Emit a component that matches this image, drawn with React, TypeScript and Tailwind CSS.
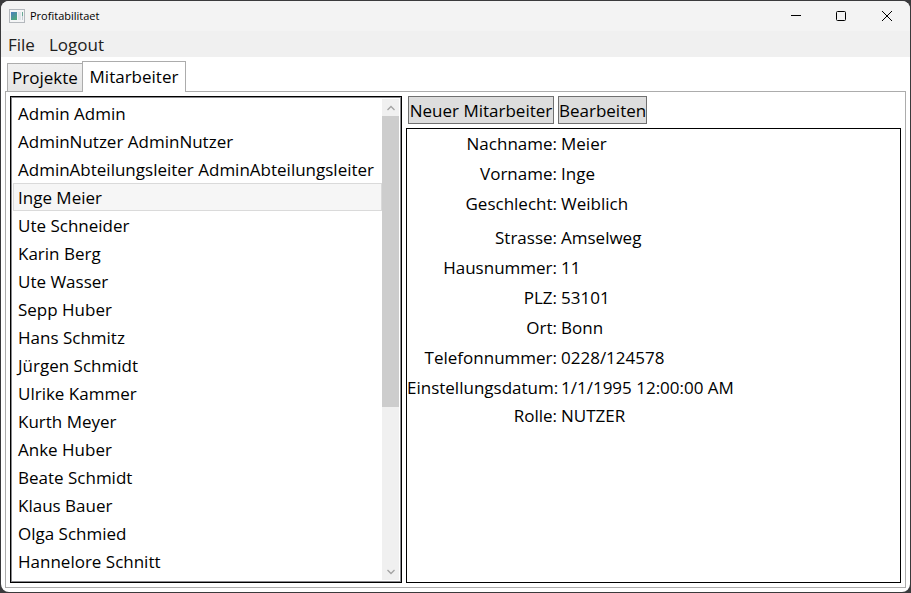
import { useState } from "react";

const employees = [
  "Admin Admin",
  "AdminNutzer AdminNutzer",
  "AdminAbteilungsleiter AdminAbteilungsleiter",
  "Inge Meier",
  "Ute Schneider",
  "Karin Berg",
  "Ute Wasser",
  "Sepp Huber",
  "Hans Schmitz",
  "Jürgen Schmidt",
  "Ulrike Kammer",
  "Kurth Meyer",
  "Anke Huber",
  "Beate Schmidt",
  "Klaus Bauer",
  "Olga Schmied",
  "Hannelore Schnitt",
];

const personal = [
  ["Nachname:", "Meier"],
  ["Vorname:", "Inge"],
  ["Geschlecht:", "Weiblich"],
];

const contact = [
  ["Strasse:", "Amselweg"],
  ["Hausnummer:", "11"],
  ["PLZ:", "53101"],
  ["Ort:", "Bonn"],
  ["Telefonnummer:", "0228/124578"],
  ["Einstellungsdatum:", "1/1/1995 12:00:00 AM"],
];

function TitleBar() {
  return (
    <header className="flex h-[30px] shrink-0 items-center bg-[#f3f3f3] pl-2">
      <svg width="16" height="14" viewBox="0 0 16 14" aria-hidden="true">
        <defs>
          <linearGradient id="pane" x1="0" y1="0" x2="0.6" y2="1">
            <stop offset="0" stopColor="#4a7fc0" />
            <stop offset="1" stopColor="#4fa77c" />
          </linearGradient>
        </defs>
        <rect x="0.5" y="0.5" width="15" height="13" fill="#f4f5f6" stroke="#b4b8bd" />
        <rect x="2" y="3" width="6" height="8" fill="url(#pane)" />
        <rect x="9" y="3" width="3" height="8" fill="#dfe5ea" />
        <rect x="13" y="3" width="1" height="4" fill="#69a995" />
        <rect x="13" y="7" width="1" height="4" fill="#c5ccd3" />
      </svg>
      <h1 className="ml-[5px] text-[11px] leading-4">Profitabilitaet</h1>
      <div className="ml-auto flex h-full">
        <button aria-label="Minimieren" className="flex w-[45px] items-center justify-center">
          <svg width="10" height="10" viewBox="0 0 10 10">
            <path d="M0 4.5H10" stroke="#000" />
          </svg>
        </button>
        <button aria-label="Maximieren" className="flex w-[45px] items-center justify-center">
          <svg width="10" height="10" viewBox="0 0 10 10">
            <rect x="0.5" y="0.5" width="9" height="9" rx="1" fill="none" stroke="#000" />
          </svg>
        </button>
        <button aria-label="Schließen" className="flex w-[47px] items-center justify-center">
          <svg width="10" height="10" viewBox="0 0 10 10">
            <path d="M0 0L10 10M10 0L0 10" stroke="#000" />
          </svg>
        </button>
      </div>
    </header>
  );
}

function ScrollBar() {
  return (
    <div className="flex w-[17px] shrink-0 flex-col bg-[#f0f0f0]" aria-hidden="true">
      <div className="flex h-[17px] items-center justify-center">
        <svg width="8" height="6" viewBox="0 0 8 6">
          <path d="M0.5 5L4 1.5L7.5 5" fill="none" stroke="#a3a3a3" strokeWidth="1.3" />
        </svg>
      </div>
      <div className="flex-1">
        <div className="h-[65%] bg-[#cdcdcd]" />
      </div>
      <div className="flex h-[17px] items-center justify-center">
        <svg width="8" height="6" viewBox="0 0 8 6">
          <path d="M0.5 1L4 4.5L7.5 1" fill="none" stroke="#a3a3a3" strokeWidth="1.3" />
        </svg>
      </div>
    </div>
  );
}

function Fields({ rows, rowClass }: { rows: string[][]; rowClass: string }) {
  return (
    <dl>
      {rows.map(([label, value]) => (
        <div key={label} className={`flex items-center gap-1 ${rowClass}`}>
          <dt className="w-[150px] shrink-0 text-right whitespace-nowrap">{label}</dt>
          <dd>{value}</dd>
        </div>
      ))}
    </dl>
  );
}

export default function App() {
  const [selected, setSelected] = useState("Inge Meier");

  return (
    <div className="h-screen bg-[#3a3a3c] p-px font-['Open_Sans','Noto_Sans',sans-serif] text-[17px] leading-6 text-black">
      <div className="flex h-full flex-col overflow-hidden rounded-lg bg-white">
        <TitleBar />
        <nav className="flex h-[26px] shrink-0 items-center gap-[14px] bg-[#f0f0f0] px-[7px] pt-0.5 text-[#212121]">
          <button>File</button>
          <button>Logout</button>
        </nav>

        <main className="flex min-h-0 flex-1 flex-col px-1 pt-1 pb-1">
          <div role="tablist" className="z-10 -mb-px flex items-end pl-0.5">
            <button
              role="tab"
              aria-selected="false"
              className="h-[29px] w-[75px] border border-r-0 border-[#acacac] bg-linear-to-b from-[#f0f0f0] to-[#e5e5e5]"
            >
              Projekte
            </button>
            <button
              role="tab"
              aria-selected="true"
              className="h-[31px] w-[104px] border border-b-0 border-[#acacac] bg-white"
            >
              Mitarbeiter
            </button>
          </div>

          <div
            role="tabpanel"
            className="flex min-h-0 flex-1 gap-1 border border-[#acacac] p-1"
          >
            <div className="flex w-[392px] shrink-0 border border-black">
              <div className="flex min-w-0 flex-1 border border-[#8a8a8e] p-px">
                <ul role="listbox" aria-label="Mitarbeiter" className="min-w-0 flex-1 overflow-hidden">
                  {employees.map((name) => (
                    <li
                      key={name}
                      role="option"
                      aria-selected={name === selected}
                      onClick={() => setSelected(name)}
                      className="h-7 border border-transparent px-1 leading-7 whitespace-nowrap aria-selected:border-[#dadada] aria-selected:bg-[#f6f6f6]"
                    >
                      {name}
                    </li>
                  ))}
                </ul>
                <ScrollBar />
              </div>
            </div>

            <div className="flex min-w-0 flex-1 flex-col gap-1">
              <div className="flex gap-1 px-0.5">
                <button className="h-7 w-[146px] border border-[#707070] bg-[#dddddd] pt-0.5 whitespace-nowrap">
                  Neuer Mitarbeiter
                </button>
                <button className="h-7 w-[89px] border border-[#707070] bg-[#dddddd] pt-0.5 whitespace-nowrap">
                  Bearbeiten
                </button>
              </div>
              <section className="min-h-0 flex-1 border border-black">
                <Fields rows={personal} rowClass="h-[30px]" />
                <div className="mt-1">
                  <Fields rows={contact} rowClass="h-[30px]" />
                </div>
                <Fields rows={[["Rolle:", "NUTZER"]]} rowClass="h-[26px]" />
              </section>
            </div>
          </div>
        </main>
      </div>
    </div>
  );
}
